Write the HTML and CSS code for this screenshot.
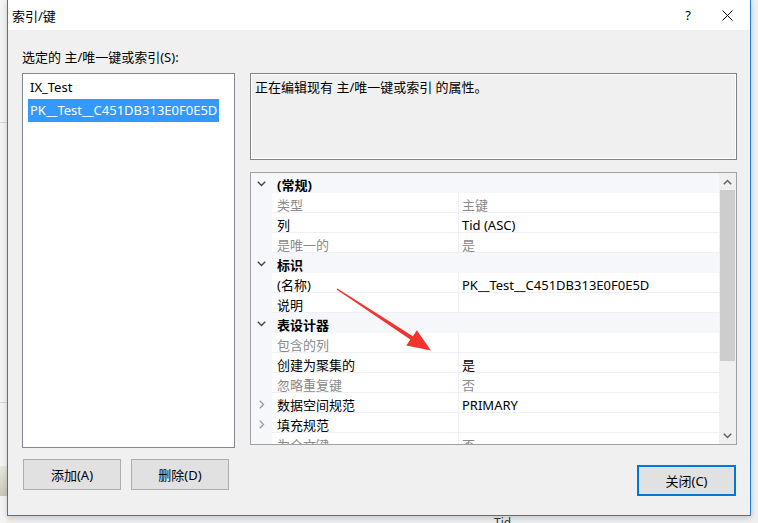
FILE: index.html
```html
<!DOCTYPE html>
<html lang="zh-CN">
<head>
<meta charset="utf-8">
<title>索引/键</title>
<link rel="stylesheet" href="styles.css">
</head>
<body>
<div class="backdrop-left">
  <div class="bl-line l1"></div>
  <div class="bl-line l2"></div>
  <div class="bl-block"></div>
</div>
<div class="window">
  <div class="titlebar">
    <span class="title">索引/键</span>
    <span class="help">?</span>
    <span class="close-x">
      <svg width="11" height="11" viewBox="0 0 11 11"><path d="M0.5 0.5 L10.5 10.5 M10.5 0.5 L0.5 10.5" stroke="#000" stroke-width="1" fill="none"/></svg>
    </span>
  </div>
  <div class="content">
    <div class="label">选定的 主/唯一键或索引(S):</div>
    <div class="main">
      <div class="left-col">
        <div class="listbox">
          <div class="item">IX_Test</div>
          <div class="item selected">PK__Test__C451DB313E0F0E5D</div>
        </div>
        <div class="btn-row">
          <button class="btn">添加(A)</button>
          <button class="btn">删除(D)</button>
        </div>
      </div>
      <div class="right-col">
        <div class="desc">正在编辑现有 主/唯一键或索引 的属性。</div>
        <div class="grid">
          <div class="rows">
            <div class="row cat"><span class="gut"><svg width="9" height="6" viewBox="0 0 9 6"><path d="M0.8 0.8 L4.5 4.5 L8.2 0.8" stroke="#444" stroke-width="1.4" fill="none"/></svg></span><span class="name">(常规)</span><span class="val"></span></div>
            <div class="row"><span class="gut"></span><span class="name ro">类型</span><span class="val ro">主键</span></div>
            <div class="row"><span class="gut"></span><span class="name">列</span><span class="val">Tid (ASC)</span></div>
            <div class="row"><span class="gut"></span><span class="name ro">是唯一的</span><span class="val ro">是</span></div>
            <div class="row cat"><span class="gut"><svg width="9" height="6" viewBox="0 0 9 6"><path d="M0.8 0.8 L4.5 4.5 L8.2 0.8" stroke="#444" stroke-width="1.4" fill="none"/></svg></span><span class="name">标识</span><span class="val"></span></div>
            <div class="row"><span class="gut"></span><span class="name">(名称)</span><span class="val">PK__Test__C451DB313E0F0E5D</span></div>
            <div class="row"><span class="gut"></span><span class="name">说明</span><span class="val"></span></div>
            <div class="row cat"><span class="gut"><svg width="9" height="6" viewBox="0 0 9 6"><path d="M0.8 0.8 L4.5 4.5 L8.2 0.8" stroke="#444" stroke-width="1.4" fill="none"/></svg></span><span class="name">表设计器</span><span class="val"></span></div>
            <div class="row"><span class="gut"></span><span class="name ro">包含的列</span><span class="val"></span></div>
            <div class="row"><span class="gut"></span><span class="name">创建为聚集的</span><span class="val">是</span></div>
            <div class="row"><span class="gut"></span><span class="name ro">忽略重复键</span><span class="val ro">否</span></div>
            <div class="row"><span class="gut"><svg width="6" height="9" viewBox="0 0 6 9"><path d="M0.8 0.8 L4.5 4.5 L0.8 8.2" stroke="#9a9a9a" stroke-width="1.3" fill="none"/></svg></span><span class="name">数据空间规范</span><span class="val">PRIMARY</span></div>
            <div class="row"><span class="gut"><svg width="6" height="9" viewBox="0 0 6 9"><path d="M0.8 0.8 L4.5 4.5 L0.8 8.2" stroke="#9a9a9a" stroke-width="1.3" fill="none"/></svg></span><span class="name">填充规范</span><span class="val"></span></div>
            <div class="row"><span class="gut"></span><span class="name ro">为全文键</span><span class="val ro">否</span></div>
          </div>
          <div class="scrollbar">
            <div class="sb-btn"><svg width="9" height="6" viewBox="0 0 9 6"><path d="M0.8 5.2 L4.5 1.5 L8.2 5.2" stroke="#606060" stroke-width="1.5" fill="none"/></svg></div>
            <div class="sb-track"><div class="sb-thumb"></div></div>
            <div class="sb-btn"><svg width="9" height="6" viewBox="0 0 9 6"><path d="M0.8 0.8 L4.5 4.5 L8.2 0.8" stroke="#606060" stroke-width="1.5" fill="none"/></svg></div>
          </div>
        </div>
        <div class="close-row">
          <button class="btn primary">关闭(C)</button>
        </div>
      </div>
    </div>
  </div>
</div>
<div class="under-text">Tid</div>
<svg class="annot" width="758" height="523" viewBox="0 0 758 523">
  <polygon points="337.4,288.4 412.9,336.3 416.8,330.3 431,350.5 406.3,345.6 410.3,339.6 336.6,289.6" fill="#f0352c"/>
</svg>
</body>
</html>
```

FILE: styles.css
```css
html, body {
  margin: 0;
  padding: 0;
}

body {
  width: 758px;
  height: 523px;
  overflow: hidden;
  position: relative;
  background: #efefef;
  font-family: "Noto Sans", "Noto Sans CJK SC", sans-serif;
  font-size: 13px;
  color: #000;
}

.backdrop-left {
  position: absolute;
  left: 0;
  top: 0;
  width: 7px;
  height: 523px;
  background: #f4f4f4;
}

.bl-line {
  position: absolute;
  left: 0;
  width: 7px;
  height: 1px;
  background: #d4d4d4;
}

.bl-line.l1 { top: 122px; }
.bl-line.l2 { top: 402px; }

.bl-block {
  position: absolute;
  left: 0;
  top: 466px;
  width: 7px;
  height: 30px;
  background: linear-gradient(#e8e8e0, #c9c8b8);
}

.window {
  position: relative;
  margin-left: 7px;
  margin-top: -1px;
  width: 742px;
  height: 515px;
  border: 1px solid #1c7fd6;
  background: #f0f0f0;
  display: flex;
  flex-direction: column;
  box-shadow: 0 2px 6px rgba(0, 0, 0, 0.18);
}

.titlebar {
  height: 30px;
  flex: none;
  background: #fff;
  display: flex;
  align-items: center;
  padding-left: 4px;
}

.title {
  flex: 1;
}

.help {
  width: 20px;
  text-align: center;
  margin-right: 24px;
  font-size: 13px;
}

.close-x {
  width: 11px;
  height: 11px;
  display: flex;
  margin-right: 17px;
}

.content {
  flex: 1;
  padding: 19px 13px 0 14px;
  display: flex;
  flex-direction: column;
}

.label {
  height: 17px;
  line-height: 17px;
}

.main {
  margin-top: 7px;
  display: flex;
  gap: 15px;
}

.left-col {
  width: 213px;
  display: flex;
  flex-direction: column;
}

.listbox {
  height: 371px;
  border: 1px solid #828790;
  background: #fff;
  padding-top: 2px;
}

.item {
  display: inline-block;
  height: 23px;
  line-height: 23px;
  margin-left: 5px;
  padding: 0 2px;
  white-space: nowrap;
}

.item.selected {
  background: #3399ff;
  color: #fff;
}

.btn-row {
  margin-top: 11px;
  margin-left: 1px;
  display: flex;
  gap: 10px;
}

.btn {
  width: 98px;
  height: 31px;
  background: #e1e1e1;
  border: 1px solid #adadad;
  font-family: "Noto Sans", "Noto Sans CJK SC", sans-serif;
  font-size: 13px;
  color: #000;
  padding: 0;
  margin: 0;
}

.btn.primary {
  width: 99px;
  border: 2px solid #0078d7;
}

.right-col {
  width: 487px;
  display: flex;
  flex-direction: column;
}

.desc {
  height: 82px;
  border: 1px solid #828282;
  box-shadow: inset 0 0 0 1px #fff;
  background: #f0f0f0;
  padding: 3px 4px 0;
  line-height: 20px;
}

.grid {
  margin-top: 12px;
  height: 271px;
  border: 1px solid #a0a0a0;
  background: #fff;
  display: flex;
}

.rows {
  flex: 1;
  overflow: hidden;
  background: #fff;
}

.row {
  display: grid;
  grid-template-columns: 21px 186px 1fr;
  height: 20px;
}

.gut {
  background: #f5f7fb;
  display: flex;
  align-items: center;
  justify-content: center;
  padding-top: 2px;
}

.name, .val {
  height: 19px;
  border-bottom: 1px solid #eef0f6;
  line-height: 24px;
  white-space: nowrap;
  overflow: hidden;
}

.name {
  padding-left: 5px;
}

.val {
  border-left: 1px solid #eef0f6;
  padding-left: 3px;
}

.row.cat .name,
.row.cat .val {
  background: #f5f7fb;
  border-color: #f5f7fb;
}

.row.cat .name {
  font-weight: bold;
}

.ro {
  color: #8a8a8a;
}

.scrollbar {
  width: 17px;
  background: #f0f0f0;
  display: flex;
  flex-direction: column;
}

.sb-btn {
  height: 17px;
  display: flex;
  align-items: center;
  justify-content: center;
}

.sb-track {
  flex: 1;
}

.sb-thumb {
  height: 171px;
  background: #cdcdcd;
  margin: 0 1px;
}

.close-row {
  margin-top: 20px;
  display: flex;
  justify-content: flex-end;
  padding-right: 1px;
}

.under-text {
  position: absolute;
  left: 494px;
  top: 514px;
  font-size: 12px;
  color: #333;
}

.annot {
  position: absolute;
  left: 0;
  top: 0;
  pointer-events: none;
}
```
